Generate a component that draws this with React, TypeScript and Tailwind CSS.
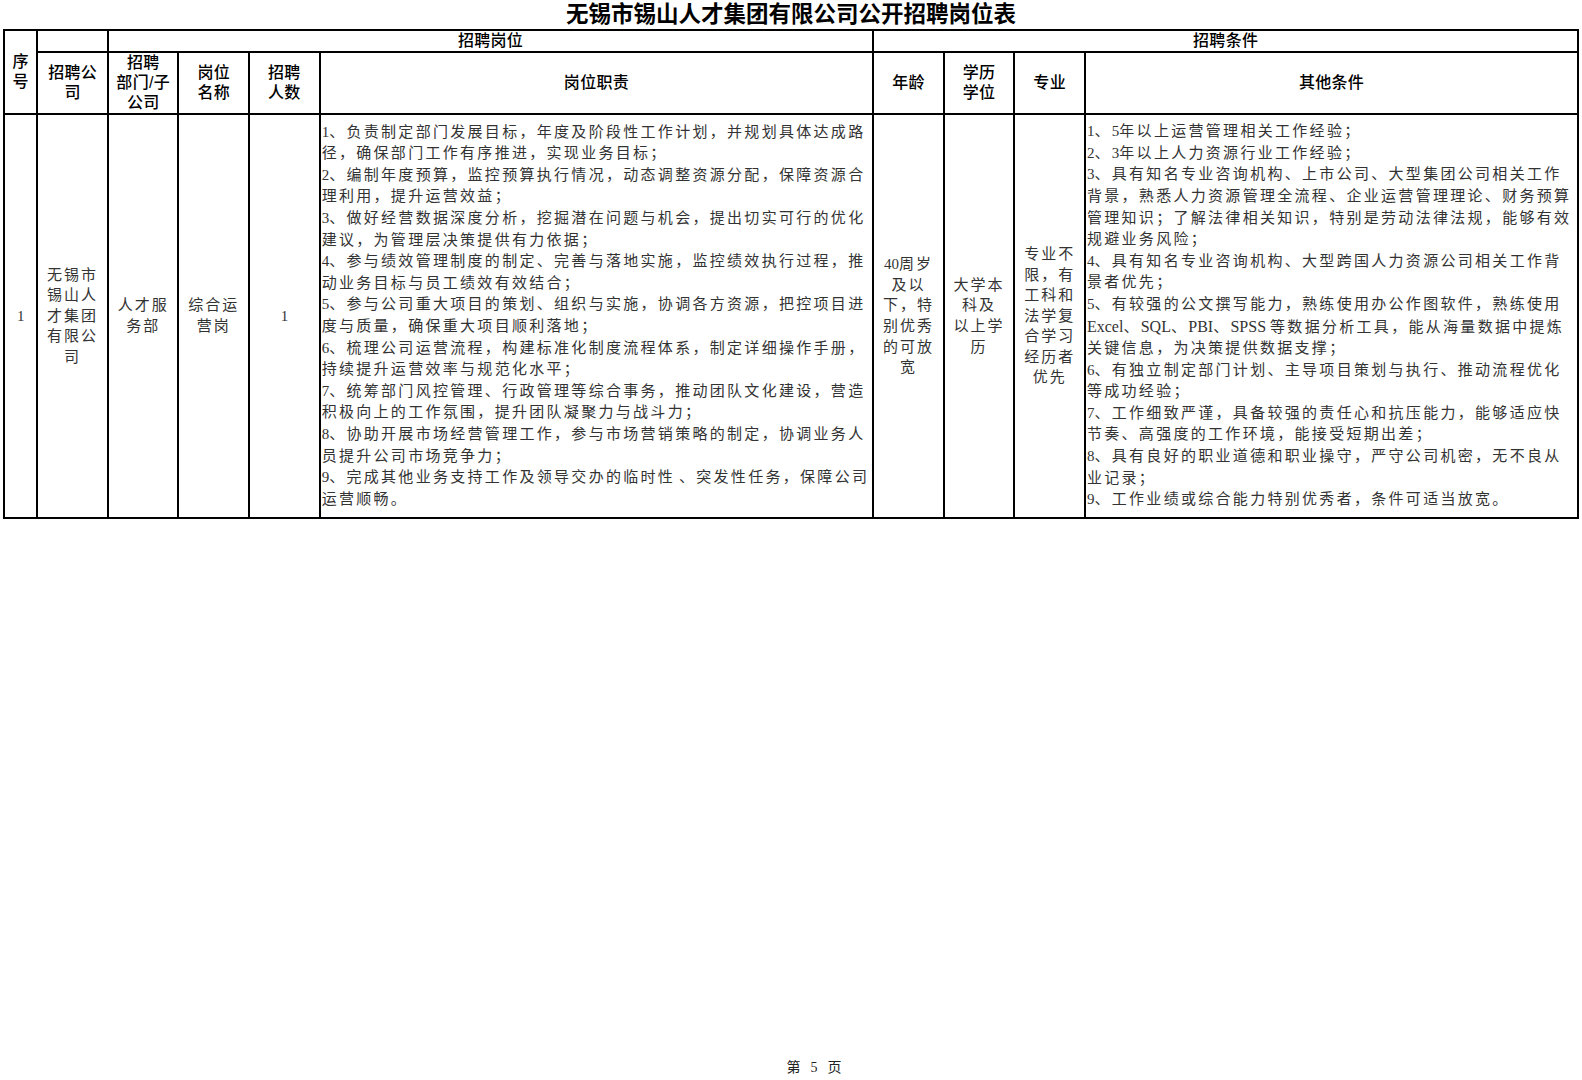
const serif = "font-['Liberation_Serif','Noto_Sans_CJK_SC',serif]";
const sans = "font-['Liberation_Sans','Noto_Sans_CJK_SC',sans-serif]";

const duties = [
    '1、负责制定部门发展目标，年度及阶段性工作计划，并规划具体达成路',
    '径，确保部门工作有序推进，实现业务目标；',
    '2、编制年度预算，监控预算执行情况，动态调整资源分配，保障资源合',
    '理利用，提升运营效益；',
    '3、做好经营数据深度分析，挖掘潜在问题与机会，提出切实可行的优化',
    '建议，为管理层决策提供有力依据；',
    '4、参与绩效管理制度的制定、完善与落地实施，监控绩效执行过程，推',
    '动业务目标与员工绩效有效结合；',
    '5、参与公司重大项目的策划、组织与实施，协调各方资源，把控项目进',
    '度与质量，确保重大项目顺利落地；',
    '6、梳理公司运营流程，构建标准化制度流程体系，制定详细操作手册，',
    '持续提升运营效率与规范化水平；',
    '7、统筹部门风控管理、行政管理等综合事务，推动团队文化建设，营造',
    '积极向上的工作氛围，提升团队凝聚力与战斗力；',
    '8、协助开展市场经营管理工作，参与市场营销策略的制定，协调业务人',
    '员提升公司市场竞争力；',
    '9、完成其他业务支持工作及领导交办的临时性 、突发性任务，保障公司',
    '运营顺畅。',
];

const others = [
    '1、5年以上运营管理相关工作经验；',
    '2、3年以上人力资源行业工作经验；',
    '3、具有知名专业咨询机构、上市公司、大型集团公司相关工作',
    '背景，熟悉人力资源管理全流程、企业运营管理理论、财务预算',
    '管理知识；了解法律相关知识，特别是劳动法律法规，能够有效',
    '规避业务风险；',
    '4、具有知名专业咨询机构、大型跨国人力资源公司相关工作背',
    '景者优先；',
    '5、有较强的公文撰写能力，熟练使用办公作图软件，熟练使用',
    'Excel、SQL、PBI、SPSS 等数据分析工具，能从海量数据中提炼',
    '关键信息，为决策提供数据支撑；',
    '6、有独立制定部门计划、主导项目策划与执行、推动流程优化',
    '等成功经验；',
    '7、工作细致严谨，具备较强的责任心和抗压能力，能够适应快',
    '节奏、高强度的工作环境，能接受短期出差；',
    '8、具有良好的职业道德和职业操守，严守公司机密，无不良从',
    '业记录；',
    '9、工作业绩或综合能力特别优秀者，条件可适当放宽。',
];

// 西文和数字不加字距，字号略大
const Line = ({ text }: { text: string }) => (
    <div className="whitespace-nowrap">
        {text.split(/([A-Za-z0-9 ]+)/).map((part, i) =>
            /^[A-Za-z0-9 ]+$/.test(part)
                ? <span key={i} className={`tracking-normal ${/[A-Za-z]/.test(part) ? 'text-[16px]' : ''}`}>{part}</span>
                : <span key={i}>{part}</span>
        )}
    </div>
);

// 表头单元格
const Th = ({ lines, colSpan, rowSpan }: { lines: string[]; colSpan?: number; rowSpan?: number }) => (
    <td colSpan={colSpan} rowSpan={rowSpan} className={`border-2 border-black text-center align-middle p-0 ${sans} text-[16px] font-medium leading-[20px] tracking-[0.3px] text-black`}>
        {lines.map((l, i) => <div key={i}>{l}</div>)}
    </td>
);

// 居中的短内容单元格
const Mid = ({ lines }: { lines: string[] }) => (
    <td className={`border-2 border-black text-center align-middle p-0 ${serif} text-[15px] leading-[20.6px] tracking-[2px] text-[#333]`}>
        {lines.map((l, i) => <Line key={i} text={l} />)}
    </td>
);

const Block = ({ lines }: { lines: string[] }) => (
    <td className={`border-2 border-black align-middle pl-[1px] pr-0 py-0 ${serif} text-[15px] leading-[21.6px] tracking-[2.3px] text-[#333]`}>
        {lines.map((l, i) => <Line key={i} text={l} />)}
    </td>
);

export default function App() {
    return (
        <div className="w-[1582px] h-[1080px] bg-white flex flex-col">
            <div className={`h-[29px] flex items-center justify-center ${serif} text-[22.5px] font-bold leading-none text-black pt-[1px]`}>
                无锡市锡山人才集团有限公司公开招聘岗位表
            </div>
            <table className="table-fixed border-collapse w-[1561px] min-w-[1561px] ml-[3px]">
                <colgroup>
                    <col className="w-[33.3px]" />
                    <col className="w-[70.6px]" />
                    <col className="w-[70.6px]" />
                    <col className="w-[70.6px]" />
                    <col className="w-[70.6px]" />
                    <col className="w-[553.5px]" />
                    <col className="w-[70.6px]" />
                    <col className="w-[70.6px]" />
                    <col className="w-[70.6px]" />
                    <col className="w-[493.1px]" />
                </colgroup>
                <tbody>
                    <tr className="h-[22px]">
                        <Th lines={['序', '号']} rowSpan={2} />
                        <td className="border-2 border-black p-0" />
                        <Th lines={['招聘岗位']} colSpan={4} />
                        <Th lines={['招聘条件']} colSpan={4} />
                    </tr>
                    <tr className="h-[62px]">
                        <Th lines={['招聘公', '司']} />
                        <Th lines={['招聘', '部门/子', '公司']} />
                        <Th lines={['岗位', '名称']} />
                        <Th lines={['招聘', '人数']} />
                        <Th lines={['岗位职责']} />
                        <Th lines={['年龄']} />
                        <Th lines={['学历', '学位']} />
                        <Th lines={['专业']} />
                        <Th lines={['其他条件']} />
                    </tr>
                    <tr className="h-[404px]">
                        <Mid lines={['1']} />
                        <Mid lines={['无锡市', '锡山人', '才集团', '有限公', '司']} />
                        <Mid lines={['人才服', '务部']} />
                        <Mid lines={['综合运', '营岗']} />
                        <Mid lines={['1']} />
                        <Block lines={duties} />
                        <Mid lines={['40周岁', '及以', '下，特', '别优秀', '的可放', '宽']} />
                        <Mid lines={['大学本', '科及', '以上学', '历']} />
                        <Mid lines={['专业不', '限，有', '工科和', '法学复', '合学习', '经历者', '优先']} />
                        <Block lines={others} />
                    </tr>
                </tbody>
            </table>
            <div className={`mt-auto mb-[5px] flex justify-center gap-[10px] pl-[46px] ${serif} text-[14px] leading-none text-[#222]`}>
                <span>第</span>
                <span>5</span>
                <span>页</span>
            </div>
        </div>
    );
}
